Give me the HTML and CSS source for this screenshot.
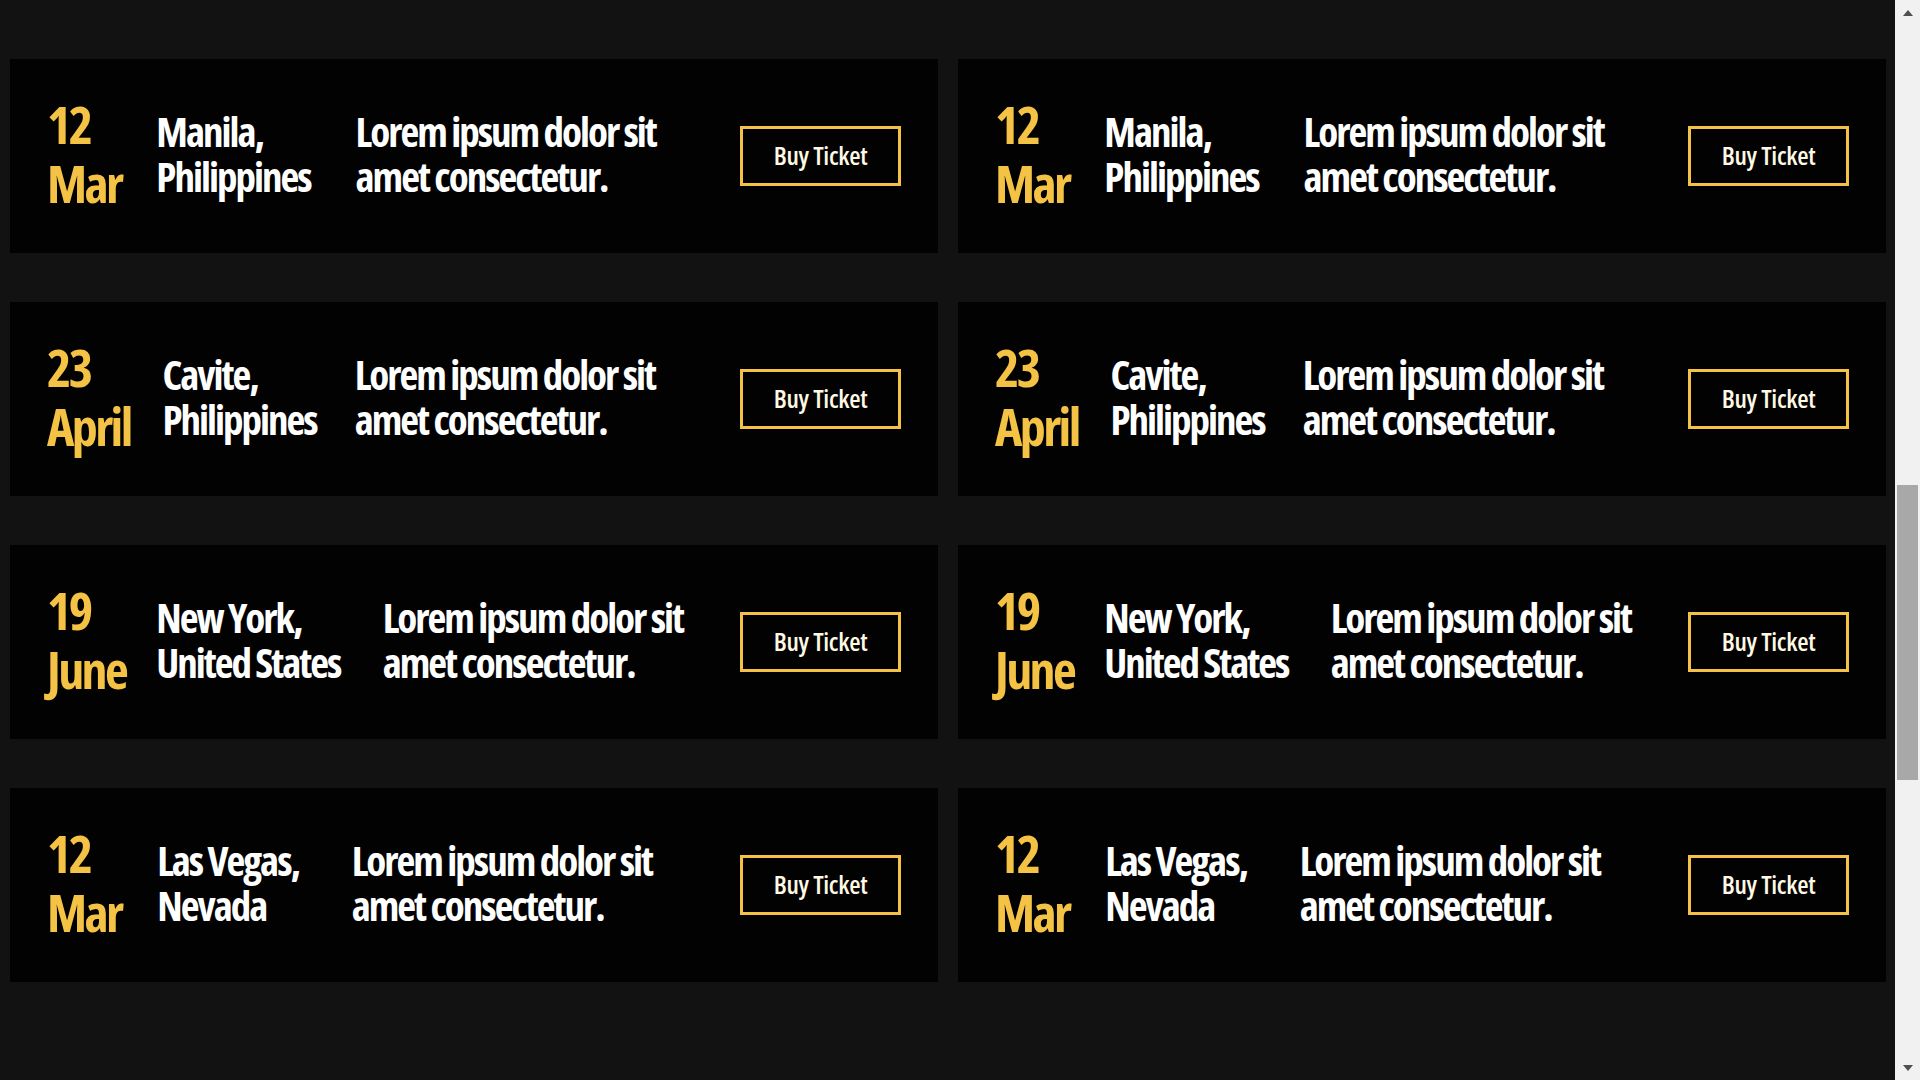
FILE: index.html
```html
<!DOCTYPE html>
<html lang="en">
<head>
<meta charset="utf-8">
<title>Events</title>
<link rel="stylesheet" href="styles.css">
</head>
<body>
<main class="events">
  <div class="event-grid">
    <article class="card">
      <h3 class="date">12 Mar</h3>
      <p class="place">Manila, Philippines</p>
      <p class="desc">Lorem ipsum dolor sit amet consectetur.</p>
      <a class="btn" href="#">Buy Ticket</a>
    </article>
    <article class="card">
      <h3 class="date">12 Mar</h3>
      <p class="place">Manila, Philippines</p>
      <p class="desc">Lorem ipsum dolor sit amet consectetur.</p>
      <a class="btn" href="#">Buy Ticket</a>
    </article>
    <article class="card">
      <h3 class="date">23 April</h3>
      <p class="place">Cavite, Philippines</p>
      <p class="desc">Lorem ipsum dolor sit amet consectetur.</p>
      <a class="btn" href="#">Buy Ticket</a>
    </article>
    <article class="card">
      <h3 class="date">23 April</h3>
      <p class="place">Cavite, Philippines</p>
      <p class="desc">Lorem ipsum dolor sit amet consectetur.</p>
      <a class="btn" href="#">Buy Ticket</a>
    </article>
    <article class="card">
      <h3 class="date">19 June</h3>
      <p class="place">New York, United States</p>
      <p class="desc">Lorem ipsum dolor sit amet consectetur.</p>
      <a class="btn" href="#">Buy Ticket</a>
    </article>
    <article class="card">
      <h3 class="date">19 June</h3>
      <p class="place">New York, United States</p>
      <p class="desc">Lorem ipsum dolor sit amet consectetur.</p>
      <a class="btn" href="#">Buy Ticket</a>
    </article>
    <article class="card">
      <h3 class="date">12 Mar</h3>
      <p class="place">Las Vegas, Nevada</p>
      <p class="desc">Lorem ipsum dolor sit amet consectetur.</p>
      <a class="btn" href="#">Buy Ticket</a>
    </article>
    <article class="card">
      <h3 class="date">12 Mar</h3>
      <p class="place">Las Vegas, Nevada</p>
      <p class="desc">Lorem ipsum dolor sit amet consectetur.</p>
      <a class="btn" href="#">Buy Ticket</a>
    </article>
  </div>
</main>
<div class="scrollbar" aria-hidden="true">
  <span class="sb-arrow"><span class="tri up"></span></span>
  <span class="sb-thumb"></span>
  <span class="sb-arrow end"><span class="tri down"></span></span>
</div>
</body>
</html>
```

FILE: styles.css
```css
html,
body {
  height: 100%;
}
body {
  margin: 0;
  display: flex;
  overflow: hidden;
  background: #121212;
  color: #fff;
  font-family: "Open Sans", "Liberation Sans", sans-serif;
  font-stretch: 75%;
}
.events {
  flex: 1;
  min-width: 0;
  padding: 59px 9px 0 10px;
}
.event-grid {
  display: grid;
  grid-template-columns: 1fr 1fr;
  column-gap: 20px;
  row-gap: 49px;
}
.card {
  display: flex;
  align-items: center;
  gap: 30px;
  height: 194px;
  box-sizing: border-box;
  padding: 0 37px;
  background: #020202;
}
.date,
.place,
.desc {
  flex: 0 1 auto;
  margin: 0;
  font-weight: 700;
}
.date {
  color: #f4c244;
  font-size: 52px;
  line-height: 59px;
  letter-spacing: -2.6px;
  margin-bottom: 7px;
}
.place,
.desc {
  font-size: 41px;
  line-height: 45px;
  letter-spacing: -2px;
  margin-bottom: 5px;
}
.btn {
  flex: none;
  margin-left: auto;
  display: flex;
  align-items: center;
  justify-content: center;
  width: 161px;
  height: 60px;
  box-sizing: border-box;
  padding-bottom: 3px;
  border: 3px solid #f4c244;
  color: #fff9e3;
  text-decoration: none;
  font-size: 26px;
  font-weight: 600;
  letter-spacing: -0.3px;
}

.scrollbar {
  flex: none;
  width: 25px;
  height: 100%;
  display: flex;
  flex-direction: column;
  background: #f1f1f1;
}
.sb-arrow {
  height: 25px;
  flex: none;
  display: flex;
  align-items: center;
  justify-content: center;
}
.sb-arrow.end {
  margin-top: auto;
}
.tri {
  width: 0;
  height: 0;
  border-left: 5.5px solid transparent;
  border-right: 5.5px solid transparent;
}
.tri.up {
  border-bottom: 6px solid #505050;
}
.tri.down {
  border-top: 6px solid #505050;
}
.sb-thumb {
  flex: none;
  height: 295px;
  margin: 460px 2px 0;
  background: #a8a8a8;
}
```
